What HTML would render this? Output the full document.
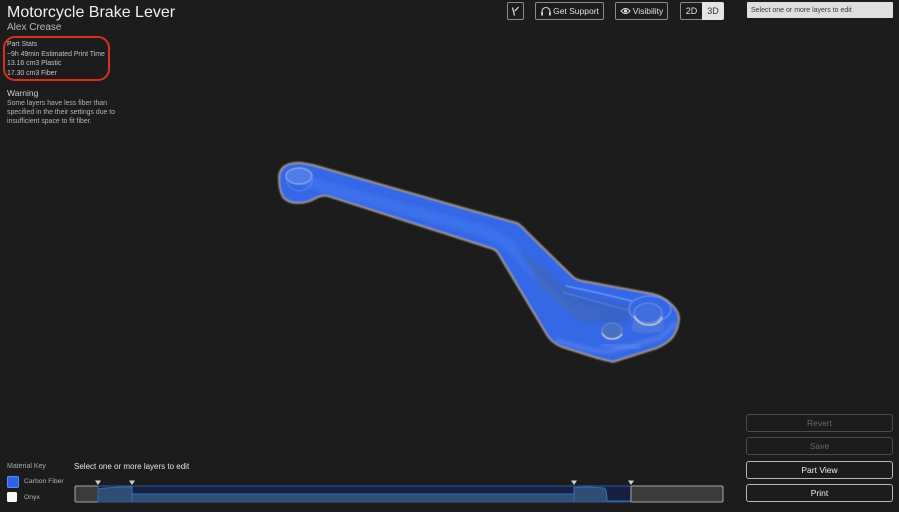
<!DOCTYPE html>
<html><head><meta charset="utf-8"><style>
html,body{margin:0;padding:0;background:#1c1c1c;}
#p{position:relative;width:899px;height:512px;overflow:hidden;background:#1c1c1c;font-family:"Liberation Sans",sans-serif;color:#d8d8d8;filter:blur(.25px);}
.t{position:absolute;white-space:nowrap;}
.b{position:absolute;box-sizing:border-box;border:1px solid #8a8a8a;border-radius:2px;font-size:8.5px;text-align:center;color:#e0e0e0;}
</style></head><body><div id="p">
<div class="t" style="left:7px;top:3px;font-size:16px;color:#f0f0f0;line-height:20px">Motorcycle Brake Lever</div>
<div class="t" style="left:7px;top:21px;font-size:10px;color:#b8b8b8;line-height:14px">Alex Crease</div>
<div class="t" style="left:7px;top:40px;font-size:6.900px;line-height:9.600px;color:#c4c4c4">Part Stats<br>~9h 49min Estimated Print Time<br>13.16 cm3 Plastic<br>17.30 cm3 Fiber</div>
<div style="position:absolute;left:3px;top:36px;width:103px;height:41px;border:2px solid #d8301c;border-radius:12px"></div>
<div class="t" style="left:7px;top:87px;font-size:8.500px;line-height:12px;color:#cfcfcf">Warning</div>
<div class="t" style="left:7px;top:100px;font-size:6.900px;line-height:8.800px;color:#b4b4b4">Some layers have less fiber than<br>specified in the their settings due to<br>insufficient space to fit fiber.</div>

<div class="b" style="left:507px;top:2px;width:17px;height:18px"><svg width="15" height="16" viewBox="0 0 15 16" style="display:block"><path d="M4.500 4.500 L6.500 12.500 M6.500 8 Q8 7 10.500 4" fill="none" stroke="#ddd" stroke-width="1.200"/></svg></div>
<div class="b" style="left:535px;top:2px;width:69px;height:18px;line-height:17px;padding-left:13px">Get Support<svg width="12" height="12" viewBox="0 0 12 12" style="position:absolute;left:4px;top:3px"><path d="M2 8 V5.500 A4 4 0 0 1 10 5.500 V8" fill="none" stroke="#ddd" stroke-width="1.100"/><rect x="1.200" y="6.300" width="1.800" height="3.200" fill="#ddd"/><rect x="9" y="6.300" width="1.800" height="3.200" fill="#ddd"/></svg></div>
<div class="b" style="left:615px;top:2px;width:53px;height:18px;line-height:17px;padding-left:13px">Visibility<svg width="11" height="10" viewBox="0 0 11 10" style="position:absolute;left:4px;top:3px"><path d="M1 5 Q5.500 0 10 5 Q5.500 10 1 5Z" fill="none" stroke="#ddd" stroke-width="1"/><circle cx="5.500" cy="5" r="1.600" fill="#ddd"/></svg></div>
<div class="b" style="left:680px;top:2px;width:23px;height:18px;line-height:17px;border-radius:2px 0 0 2px;font-size:9px">2D</div>
<div class="b" style="left:702px;top:2px;width:22px;height:18px;line-height:17px;background:#e4e4e4;border-color:#e4e4e4;color:#333;border-radius:0 2px 2px 0;font-size:9px">3D</div>
<div style="position:absolute;left:747px;top:2px;width:146px;height:16px;background:#dedede;border-radius:1px;color:#3a3a3a;font-size:7px;line-height:18px;text-indent:4px">Select one or more layers to edit</div>

<svg width="899" height="512" viewBox="0 0 899 512" style="position:absolute;left:0;top:0">
<defs>
<filter id="bl" x="-20%" y="-20%" width="140%" height="140%"><feGaussianBlur stdDeviation="1.600"/></filter>
<filter id="bm"><feGaussianBlur stdDeviation=".7"/></filter>
<filter id="bs"><feGaussianBlur stdDeviation=".4"/></filter>
<clipPath id="c"><path d="M279 178 Q279 170 285 166 Q292 162 302 163 L313 165 L470 210 L517 223 Q522 226 527 232 L573 277 Q577 280 583 281 L653 294 Q664 297 671 304 Q679 311 679 319 Q678 332 670 340 Q664 345 657 348 L613 362 L597 358 L562 347 Q552 343 547 335 L498 253 Q495 249 490 248 L328 196 Q322 195 316 198 Q308 203 298 203 Q288 203 283 197 Q279 190 279 178Z"/></clipPath>
</defs>
<path d="M279 178 Q279 170 285 166 Q292 162 302 163 L313 165 L470 210 L517 223 Q522 226 527 232 L573 277 Q577 280 583 281 L653 294 Q664 297 671 304 Q679 311 679 319 Q678 332 670 340 Q664 345 657 348 L613 362 L597 358 L562 347 Q552 343 547 335 L498 253 Q495 249 490 248 L328 196 Q322 195 316 198 Q308 203 298 203 Q288 203 283 197 Q279 190 279 178Z" fill="#3468e6" stroke="#9a958a" stroke-width="2" filter="url(#bm)"/>
<g clip-path="url(#c)">
<path d="M300 180 L480 230 Q500 236 512 248 L560 300 Q575 312 600 316" fill="none" stroke="#4478f2" stroke-width="12" filter="url(#bl)" opacity=".55"/>
<path d="M518 248 L540 285 Q555 305 585 322 L604 322 L628 322 L630 306 L585 296 Q560 288 545 270 Z" fill="#3e5fa8" filter="url(#bl)" opacity=".5"/>
<path d="M528 262 Q545 295 590 322" fill="none" stroke="#6b7899" stroke-width="1" filter="url(#bs)" opacity=".45"/>
<path d="M538 262 Q560 296 605 316" fill="none" stroke="#6b7899" stroke-width="1" filter="url(#bs)" opacity=".4"/>
<path d="M566 286 Q600 293 632 301" fill="none" stroke="#8aa9f2" stroke-width="1.300" filter="url(#bs)" opacity=".85"/>
<path d="M562 292 Q590 300 628 310" fill="none" stroke="#7697ec" stroke-width="1" filter="url(#bs)" opacity=".6"/>
<path d="M556 340 Q600 354 612 351 L660 338 L677 322" fill="none" stroke="#5e87ee" stroke-width="5" filter="url(#bl)" opacity=".55"/>
<path d="M600 345 L640 348" stroke="#6b90ef" stroke-width="6" filter="url(#bl)" opacity=".4"/>
</g>
<ellipse cx="299" cy="176" rx="13" ry="8" fill="#4f7ce6" stroke="#9eb4ec" stroke-width="1" filter="url(#bs)"/>
<path d="M286 178 Q287 189 299 191 Q311 190 313 179" fill="none" stroke="#6f95ee" stroke-width="1" opacity=".6"/>
<ellipse cx="650" cy="309" rx="21" ry="13" fill="none" stroke="#7d9ff0" stroke-width="1.300" opacity=".75" filter="url(#bs)"/>
<path d="M635 315 L631 331 Q648 336 664 330 L663 315Z" fill="#5f84d8" opacity=".5" filter="url(#bs)"/>
<ellipse cx="648" cy="313" rx="14" ry="10" fill="#3f6ee0" stroke="#7f9bdc" stroke-width=".8" filter="url(#bs)"/>
<path d="M634 316 Q639 325 649 325 Q659 325 662 317" fill="none" stroke="#d4d6dc" stroke-width="1.500" filter="url(#bs)"/>
<ellipse cx="612" cy="331" rx="10" ry="8" fill="#4a6fc4" stroke="#7d90c4" stroke-width=".8" filter="url(#bs)"/>
<path d="M602 333 Q605 339 612 339 Q619 339 622 334" fill="none" stroke="#cfd3dc" stroke-width="1.300" filter="url(#bs)"/>
</svg>

<div class="t" style="left:7px;top:462px;font-size:7px;line-height:10px;color:#a8a8a8">Material Key</div>
<div style="position:absolute;left:7px;top:476px;width:10px;height:10px;background:#2c63e6;border-radius:1.500px;border:.5px solid #5a8af0"></div>
<div style="position:absolute;left:7px;top:492px;width:10px;height:10px;background:#f6f6f6;border-radius:1.500px"></div>
<div class="t" style="left:24px;top:477px;font-size:6.800px;line-height:10px;color:#b4b4b4">Carbon Fiber</div>
<div class="t" style="left:24px;top:493px;font-size:6.800px;line-height:10px;color:#b4b4b4">Onyx</div>
<div class="t" style="left:74px;top:461px;font-size:8px;line-height:11px;color:#e4e4e4">Select one or more layers to edit</div>

<svg width="899" height="512" viewBox="0 0 899 512" style="position:absolute;left:0;top:0">
<rect x="75" y="486" width="648" height="16" rx="1.500" fill="#3a3a3a" stroke="#a8a8a8" stroke-width="1"/>
<rect x="98" y="486" width="533" height="16" fill="#162040" stroke="#2a5a9c" stroke-width="1"/>
<path d="M98 501.500 V489 Q110 487 132 487 V494 H574 V488 Q576 487 590 487 L604 488 Q607 489 607 501 V501.500 Z" fill="#2d4d72"/>
<path d="M98 489 Q110 487 132 487 V494 H574 V488 Q576 487 590 487 L604 488 Q607 489 607 501 H631" fill="none" stroke="#2e70b8" stroke-width="1"/>
<path d="M98 486 V502 M132 486 V502 M574 486 V502" stroke="#3a70b0" stroke-width=".8"/>
<path d="M631 486 V502" stroke="#a8a8a8" stroke-width="1"/>
<path d="M95 480.500 H101 L98 485Z M129 480.500 H135 L132 485Z M571 480.500 H577 L574 485Z M628 480.500 H634 L631 485Z" fill="#d0d0d0"/>
</svg>

<div class="b" style="left:746px;top:414px;width:147px;height:18px;line-height:16px;border-color:#4c4c4c;color:#666;border-radius:3px">Revert</div>
<div class="b" style="left:746px;top:437px;width:147px;height:18px;line-height:16px;border-color:#4c4c4c;color:#666;border-radius:3px">Save</div>
<div class="b" style="left:746px;top:461px;width:147px;height:18px;line-height:16px;border-color:#b8b8b8;color:#eee;border-radius:3px">Part View</div>
<div class="b" style="left:746px;top:484px;width:147px;height:18px;line-height:16px;border-color:#b8b8b8;color:#eee;border-radius:3px">Print</div>
</div></body></html>
